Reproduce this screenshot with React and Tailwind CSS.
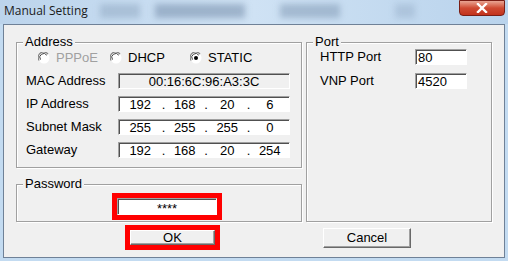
const FONT = { fontFamily: '"Liberation Sans", Arial, sans-serif' };

function Radio({ label, checked, disabled }) {
  return (
    <div className="flex items-center gap-[6px]">
      <svg width="12" height="12" viewBox="0 0 12 12">
        <circle cx="6" cy="6" r="5.5" fill="#ffffff" />
        <path d="M10 2.2 A5 5 0 0 0 1.2 8.5" fill="none" stroke="#808080" strokeWidth="1.2" />
        <path d="M8.8 3.2 A3.6 3.6 0 0 0 2.5 7.6" fill="none" stroke="#404040" strokeWidth="1" />
        {checked && <circle cx="6" cy="6" r="2" fill="#000000" />}
      </svg>
      <span className={disabled ? 'text-[#a0a0a0]' : 'text-black'}>{label}</span>
    </div>
  );
}

function Field({ className = '', children }) {
  return (
    <div
      className={`flex items-center border border-t-[#a0a0a0] border-l-[#a0a0a0] border-r-white border-b-white shadow-[inset_1px_1px_0_#505050] ${className}`}
    >
      {children}
    </div>
  );
}

function IpField({ parts }) {
  return (
    <Field className="w-[172px] h-[16px] bg-white leading-none">
      {parts.map((p, i) => (
        <div key={i} className="flex flex-1 items-center">
          {i > 0 && <span className="w-[4px] text-center">.</span>}
          <span className="flex-1 text-center">{p}</span>
        </div>
      ))}
    </Field>
  );
}

function Group({ label, className = '', children }) {
  return (
    <div className={`relative border border-[#a0a0a0] shadow-[1px_1px_0_#ffffff,inset_1px_1px_0_#ffffff] ${className}`}>
      <span className="absolute -top-[9px] left-[6px] bg-[#f0f0f0] px-[2px] leading-[16px]">{label}</span>
      {children}
    </div>
  );
}

function Button({ children, className = '' }) {
  return (
    <div
      className={`flex items-center justify-center bg-[#f0f0f0] border border-t-white border-l-white border-r-[#696969] border-b-[#696969] shadow-[inset_-1px_-1px_0_#a0a0a0] ${className}`}
    >
      {children}
    </div>
  );
}

export default function App() {
  const rows = [
    ['IP Address', ['192', '168', '20', '6']],
    ['Subnet Mask', ['255', '255', '255', '0']],
    ['Gateway', ['192', '168', '20', '254']],
  ];

  return (
    <div className="w-[508px] h-[261px] flex flex-col bg-[#c3dbf1] text-[13px] text-black" style={FONT}>
      <div className="relative h-[24px] flex items-center bg-gradient-to-r from-[#bcd4ec] via-[#cfe2f4] to-[#b9d3ec] overflow-hidden">
        <div className="absolute left-[100px] top-[4px] w-[40px] h-[14px] bg-[#8ea6c0]/50 blur-[3px]" />
        <div className="absolute left-[155px] top-[4px] w-[90px] h-[14px] bg-[#6e86a3]/50 blur-[3px]" />
        <div className="absolute left-[280px] top-[4px] w-[60px] h-[14px] bg-[#7c94b0]/50 blur-[3px]" />
        <div className="absolute left-[395px] top-[4px] w-[20px] h-[14px] bg-[#8ea6c0]/40 blur-[3px]" />
        <span
          className="relative ml-[4px] mt-[-3px] text-[12px] text-[#1b1b1b]"
          style={{ fontFamily: '"Open Sans", "Noto Sans", sans-serif' }}
        >
          Manual Setting
        </span>
        <div className="absolute right-[3px] top-0 w-[46px] h-[16px] rounded-b-[4px] border border-[#7a1e15] bg-gradient-to-b from-[#e8a493] via-[#cf4a32] to-[#c2321c] flex items-center justify-center">
          <svg width="12" height="10" viewBox="0 0 12 10">
            <path d="M2 1 L10 9 M10 1 L2 9" stroke="#ffffff" strokeWidth="2.4" strokeLinecap="square" />
          </svg>
        </div>
      </div>

      <div className="mx-[3px] h-[234px] border border-[#6f8197] bg-[#f0f0f0] px-[12px] pt-[17px]">
        <div className="flex gap-[4px]">
          <div className="w-[286px] flex flex-col gap-[16px]">
            <Group label="Address" className="h-[126px]">
              <div className="flex items-center h-[14px] mt-[8px] ml-[21px] leading-[14px]">
                <div className="w-[72px]"><Radio label="PPPoE" disabled /></div>
                <div className="w-[80px]"><Radio label="DHCP" /></div>
                <Radio label="STATIC" checked />
              </div>
              <div className="mt-[8px] ml-[9px] flex flex-col gap-[7px] leading-[16px]">
                <div className="flex items-center h-[16px]">
                  <span className="w-[92px]">MAC Address</span>
                  <Field className="w-[172px] h-[16px] bg-[#f0f0f0] justify-center leading-none">00:16:6C:96:A3:3C</Field>
                </div>
                {rows.map(([label, parts]) => (
                  <div key={label} className="flex items-center h-[16px]">
                    <span className="w-[92px]">{label}</span>
                    <IpField parts={parts} />
                  </div>
                ))}
              </div>
            </Group>
            <Group label="Password" className="h-[38px]">
              <div className="ml-[95px] mt-[8px] w-[110px] h-[27px] border-[5px] border-[#ff0000]">
                <Field className="w-full h-full bg-white justify-center leading-none pt-[4px]">****</Field>
              </div>
            </Group>
          </div>

          <Group label="Port" className="w-[186px] h-[180px]">
            <div className="mt-[6px] ml-[13px] flex flex-col gap-[8px] leading-[16px]">
              <div className="flex items-center h-[16px]">
                <span className="w-[95px]">HTTP Port</span>
                <Field className="w-[52px] h-[16px] bg-white pl-[2px] leading-none">80</Field>
              </div>
              <div className="flex items-center h-[16px]">
                <span className="w-[95px]">VNP Port</span>
                <Field className="w-[52px] h-[16px] bg-white pl-[2px] leading-none">4520</Field>
              </div>
            </div>
          </Group>
        </div>

        <div className="flex mt-[3px]">
          <div className="ml-[109px] w-[95px] h-[25px] border-[5px] border-[#ff0000]">
            <Button className="w-full h-full">OK</Button>
          </div>
          <Button className="ml-[103px] mt-[3px] w-[88px] h-[20px]">Cancel</Button>
        </div>
      </div>
    </div>
  );
}
